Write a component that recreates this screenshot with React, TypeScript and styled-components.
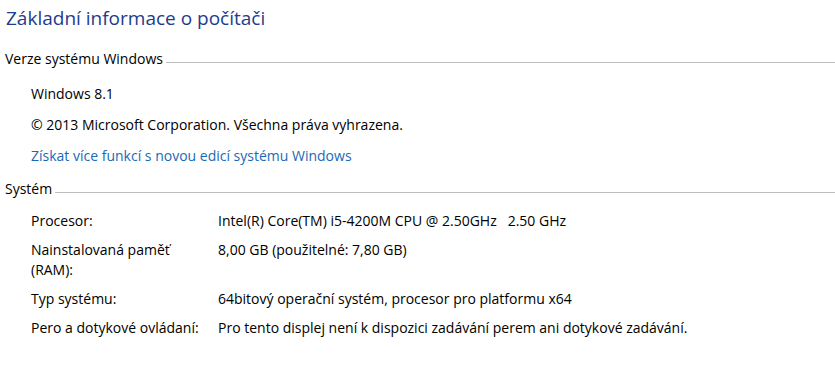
import React from "react";
import styled, { createGlobalStyle } from "styled-components";

const GlobalStyle = createGlobalStyle`
  html, body {
    margin: 0;
    padding: 0;
    background: #ffffff;
  }
  body {
    font-family: "Open Sans", "Noto Sans", "Liberation Sans", sans-serif;
    color: #000000;
  }
`;

const Page = styled.div`
  width: 835px;
  height: 365px;
  overflow: hidden;
  padding-left: 5px;
  box-sizing: border-box;
  font-size: 14px;
  line-height: 20px;
`;

const Title = styled.h1`
  margin: 4px 0 0 1px;
  font-size: 19px;
  line-height: 28px;
  font-weight: 400;
  color: #1e3b8c;
`;

const Section = styled.section<{ $top: number }>`
  margin-top: ${(p) => p.$top}px;
`;

const SectionHeader = styled.div`
  display: flex;
  align-items: flex-start;
  gap: 3px;
`;

const SectionName = styled.span`
  white-space: nowrap;
`;

const Rule = styled.div`
  flex: 1;
  height: 1px;
  margin-top: 13px;
  background: #bcbcbc;
`;

const Body = styled.div<{ $top: number; $gap: number }>`
  display: flex;
  flex-direction: column;
  gap: ${(p) => p.$gap}px;
  padding-left: 26px;
  margin-top: ${(p) => p.$top}px;
`;

const Line = styled.div``;

const Link = styled.a`
  color: #1a69b5;
  text-decoration: none;
  cursor: pointer;
`;

const InfoRow = styled.div`
  display: grid;
  grid-template-columns: 183px 1fr;
  column-gap: 4px;
`;

const Label = styled.div``;

const Value = styled.div`
  white-space: pre;
`;

const rows: { label: string; value: string }[] = [
  { label: "Procesor:", value: "Intel(R) Core(TM) i5-4200M CPU @ 2.50GHz   2.50 GHz" },
  { label: "Nainstalovaná paměť (RAM):", value: "8,00 GB (použitelné: 7,80 GB)" },
  { label: "Typ systému:", value: "64bitový operační systém, procesor pro platformu x64" },
  {
    label: "Pero a dotykové ovládaní:",
    value: "Pro tento displej není k dispozici zadávání perem ani dotykové zadávání.",
  },
];

export default function App() {
  return (
    <>
      <GlobalStyle />
      <Page>
        <Title>Základní informace o počítači</Title>
        <Section $top={17}>
          <SectionHeader>
            <SectionName>Verze systému Windows</SectionName>
            <Rule />
          </SectionHeader>
          <Body $top={15} $gap={11}>
            <Line>Windows 8.1</Line>
            <Line>© 2013 Microsoft Corporation. Všechna práva vyhrazena.</Line>
            <Line>
              <Link>Získat více funkcí s novou edicí systému Windows</Link>
            </Line>
          </Body>
        </Section>
        <Section $top={13}>
          <SectionHeader>
            <SectionName>Systém</SectionName>
            <Rule />
          </SectionHeader>
          <Body $top={12} $gap={9}>
            {rows.map((r) => (
              <InfoRow key={r.label}>
                <Label>{r.label}</Label>
                <Value>{r.value}</Value>
              </InfoRow>
            ))}
          </Body>
        </Section>
      </Page>
    </>
  );
}
